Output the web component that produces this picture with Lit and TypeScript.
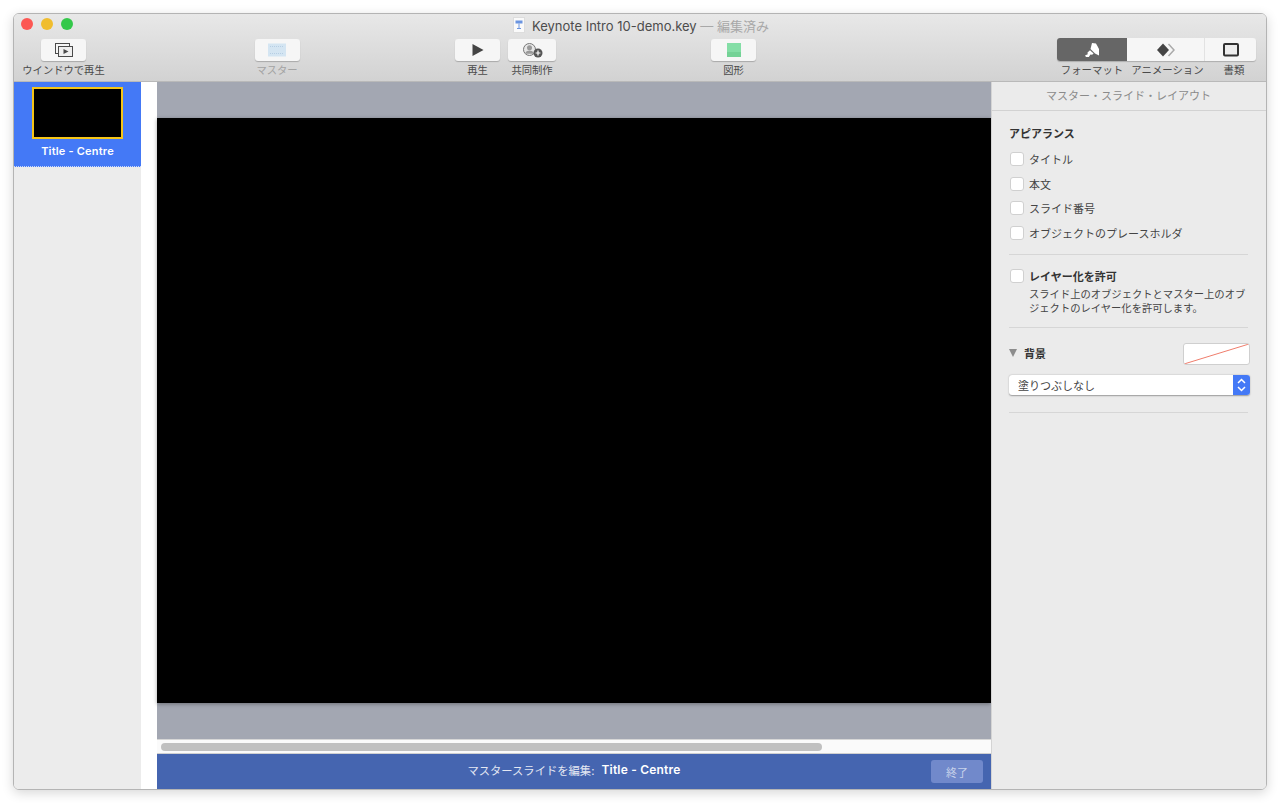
import { LitElement, html, css, svg } from "lit";
import { customElement } from "lit/decorators.js";

const FONT = css`Inter, "Noto Sans CJK JP", sans-serif`;

const icons = {
  window: svg`<rect x="1.5" y="1.5" width="14" height="10" fill="none" stroke="#4a4a4a" stroke-width="1"/>
    <rect x="4.5" y="4.5" width="14" height="10" fill="#efefef" stroke="#4a4a4a" stroke-width="1"/>
    <path d="M9.5 7l5 2.5-5 2.5z" fill="#4a4a4a"/>`,
  master: svg`<rect x="1" y="1.500" width="18" height="13" fill="#d4e5f2"/>
    <path d="M3 4.500h14M3 11.500h14" stroke="#a9c4dc" stroke-width=".7" stroke-dasharray="1 1"/>`,
  play: svg`<path d="M3.500 2l11 6-11 6z" fill="#444"/>`,
  collab: svg`<circle cx="7.500" cy="7.500" r="6" fill="#e6e6e6" stroke="#777"/>
    <circle cx="7.500" cy="5.800" r="2.500" fill="#999"/>
    <path d="M3.200 11.800c.6-2.600 2.300-3.200 4.300-3.200s3.700.6 4.300 3.200" fill="#999"/>
    <circle cx="16" cy="11" r="4.500" fill="#555"/>
    <path d="M13.600 11h4.800M16 8.600v4.800" stroke="#fff" stroke-width="1.200"/>`,
  shape: svg`<rect x="2" y="1" width="14" height="14" fill="#84dea6"/>
    <rect x="2" y="10" width="14" height="5" fill="#74d296"/>`,
  format: svg`<path d="M7 0l4 .5 3 5.500v6.500L10 10.500 5.500 6z" fill="#fff"/>
    <path d="M5 7.200l3.600 3.300-1.500 1.300-1.600-.4L3.800 14 1 14l-1-1.500 2.700-1.300-.2-1.600z" fill="#fff"/>`,
  anim: svg`<path d="M0 7l6-6.500 6 6.500-6 6.500z" fill="#444"/>
    <path d="M11.500 1l5.500 6-5.500 6" fill="none" stroke="#aaa" stroke-width="1.500"/>`,
  doc: svg`<rect x="1" y="1" width="14" height="11.500" rx="1" fill="#eee" stroke="#333" stroke-width="2"/>`,
  file: svg`<rect x=".5" y=".5" width="11" height="15" fill="#fafafa" stroke="#ddd"/>
    <rect x="2.500" y="3.500" width="7" height="3" fill="#6a94e0"/>
    <path d="M6 6.500v5M4 11.500h4" stroke="#6a94e0"/>`,
};

@customElement("tool-button")
export class ToolButton extends LitElement {
  static properties = {
    label: { type: String },
    icon: { attribute: false },
    iconWidth: { type: Number },
  };

  declare label: string;
  declare icon: unknown;
  declare iconWidth: number;

  static styles = css`
    :host {
      display: flex;
      flex-direction: column;
      align-items: center;
      gap: 2px;
      font-family: ${FONT};
    }
    .btn {
      height: 22px;
      width: var(--btn-w, 45px);
      box-sizing: border-box;
      border-radius: 3px;
      background: #f6f6f6;
      box-shadow: 0 1px 1px rgba(0, 0, 0, 0.22);
      display: flex;
      align-items: center;
      justify-content: center;
    }
    .label {
      font-size: 10.300px;
      line-height: 15px;
      color: #4a4a4a;
      white-space: nowrap;
    }
    :host([dim]) .label {
      color: #a3a3a3;
    }
  `;

  render() {
    const w = this.iconWidth || 20;
    return html`
      <div class="btn">
        <svg width=${w} height="16" viewBox="0 0 ${w} 16">${this.icon}</svg>
      </div>
      <div class="label">${this.label}</div>
    `;
  }
}

@customElement("app-root")
export class AppRoot extends LitElement {
  static styles = css`
    :host {
      display: block;
      height: 803px;
      padding: 13px 13px 0;
      box-sizing: border-box;
      background: #fff;
      font-family: ${FONT};
      overflow: hidden;
    }
    .window {
      width: 1254px;
      height: 777px;
      box-sizing: border-box;
      border: 1px solid #b4b4b4;
      border-radius: 6px;
      overflow: hidden;
      display: flex;
      flex-direction: column;
      box-shadow: 0 3px 12px rgba(0, 0, 0, 0.16);
    }
    .toolbar {
      height: 68px;
      flex: none;
      box-sizing: border-box;
      border-bottom: 1px solid #b9b9b9;
      background: linear-gradient(#e8e8e8, #d2d2d2);
      display: flex;
      flex-direction: column;
    }
    .titlebar {
      height: 25px;
      flex: none;
      box-sizing: border-box;
      display: flex;
      align-items: center;
      position: relative;
      justify-content: center;
      font-size: 13px;
      color: #4c4c4c;
      padding-left: 2px;
      padding-bottom: 3px;
      gap: 7px;
    }
    .lights {
      position: absolute;
      left: 7px;
      top: 4px;
      display: flex;
      gap: 8px;
    }
    .light {
      width: 12px;
      height: 12px;
      border-radius: 50%;
    }
    .red { background: #fc5753; }
    .yellow { background: #f0bd2e; }
    .green { background: #34c84a; }
    .edited { color: #a8a8a8; }
    .tools {
      display: flex;
      align-items: flex-start;
    }
    .slot {
      display: flex;
      justify-content: center;
    }
    .slot-window { width: 99px; }
    .slot-master { width: 90px; margin-left: 119px; }
    .slot-play { width: 45px; margin-left: 133px; }
    .slot-collab { width: 48px; margin-left: 8px; --btn-w: 48px; }
    .slot-shape { width: 45px; margin-left: 155px; }
    .segwrap {
      display: flex;
      flex-direction: column;
      margin-left: 301px;
      margin-top: -1px;
    }
    .seg {
      display: flex;
      height: 23px;
      width: 199px;
      background: #f6f6f6;
      border-radius: 3px;
      overflow: hidden;
      box-shadow: 0 1px 1px rgba(0, 0, 0, 0.2);
    }
    .seg > div {
      display: flex;
      align-items: center;
      justify-content: center;
      box-sizing: border-box;
    }
    .seg .s2 {
      border-right: 1px solid #e2e2e2;
    }
    .seg .on {
      background: #666;
    }
    .seglabels {
      display: flex;
      font-size: 10.400px;
      line-height: 15px;
      color: #4a4a4a;
      margin-top: 2px;
      text-align: center;
      white-space: nowrap;
    }
    .seglabels > div {
      box-sizing: border-box;
    }
    .seglabels .s2 { padding-left: 3px; }
    .seglabels .s3 { padding-left: 7px; }
    .s1 { width: 70px; }
    .s2 { width: 78px; }
    .s3 { width: 51px; }
    .body {
      flex: 1;
      display: flex;
      min-height: 0;
    }
    .sidebar {
      width: 127px;
      flex: none;
      background: #ececec;
    }
    .selected {
      height: 85px;
      box-sizing: border-box;
      background: #4479f6;
      border-bottom: 1px dotted #c9d8fb;
      padding-top: 5px;
      display: flex;
      flex-direction: column;
      align-items: center;
    }
    .thumb {
      width: 91px;
      height: 52px;
      box-sizing: border-box;
      background: #000;
      border: 2px solid #f5c518;
      flex: none;
    }
    .thumb-label {
      margin-top: 5px;
      font-size: 11px;
      line-height: 14px;
      font-weight: 600;
      color: #fff;
      letter-spacing: 0.2px;
    }
    .gutter {
      width: 16px;
      flex: none;
      background: #fff;
    }
    .main {
      width: 834px;
      flex: none;
      display: flex;
      flex-direction: column;
    }
    .canvas {
      height: 657px;
      flex: none;
      background: #a3a7b2;
      padding-top: 36px;
      box-sizing: border-box;
    }
    .slide {
      height: 585px;
      background: #000;
      box-shadow: 0 1px 4px rgba(0, 0, 0, 0.35);
    }
    .scroll {
      height: 15px;
      flex: none;
      box-sizing: border-box;
      background: #fafafa;
      border-top: 1px solid #d6d6d6;
      border-bottom: 1px solid #d0d0d0;
      padding: 3px 169px 3px 4px;
    }
    .thumbbar {
      height: 8px;
      border-radius: 4px;
      background: #c0c0c0;
    }
    .editbar {
      flex: 1;
      background: #4565b0;
      display: flex;
      align-items: center;
      position: relative;
      justify-content: center;
      font-size: 11.300px;
      color: #e4e8f3;
      padding-bottom: 4px;
      box-sizing: border-box;
      gap: 7px;
    }
    .editbar b {
      font-weight: 600;
      font-size: 12px;
      color: #fff;
      letter-spacing: 0.2px;
    }
    .done {
      position: absolute;
      right: 8px;
      top: 6px;
      width: 52px;
      height: 23px;
      border-radius: 3px;
      background: #7189cb;
      color: #c7d2ea;
      font-size: 11px;
      display: flex;
      align-items: center;
      justify-content: center;
    }
    .inspector {
      flex: 1;
      background: #ebebeb;
      border-left: 1px solid #d4d4d4;
      display: flex;
      flex-direction: column;
      font-size: 11px;
      color: #444;
    }
    .insp-head {
      height: 29px;
      flex: none;
      box-sizing: border-box;
      border-bottom: 1px solid #d2d2d2;
      display: flex;
      align-items: center;
      justify-content: center;
      color: #8a8a8a;
      padding-bottom: 2px;
      padding-right: 1px;
    }
    .content {
      padding: 15px 17px 0 17px;
    }
    .heading {
      font-weight: 600;
      color: #333;
      line-height: 16px;
      margin-bottom: 9.500px;
    }
    .check-row {
      display: flex;
      align-items: center;
      gap: 5px;
      height: 15px;
      margin-bottom: 9.670px;
      margin-left: 1px;
    }
    .box {
      width: 14px;
      height: 14px;
      flex: none;
      box-sizing: border-box;
      background: #fff;
      border: 1px solid #d0d0d0;
      border-radius: 3px;
    }
    .divider {
      height: 1px;
      background: #d6d6d6;
      margin-right: 1px;
    }
    .d1 { margin-top: 14px; margin-bottom: 13px; }
    .strong {
      font-weight: 600;
      color: #333;
    }
    .check-row.layer { margin-bottom: 4px; }
    .desc {
      padding-left: 20px;
      font-size: 10.300px;
      line-height: 14px;
      color: #444;
      white-space: nowrap;
    }
    .d2 { margin-top: 12px; margin-bottom: 15px; }
    .bg-row {
      display: flex;
      align-items: center;
      height: 22px;
    }
    .bg-label {
      display: flex;
      align-items: center;
      margin-top: -2px;
    }
    .tri {
      width: 0;
      height: 0;
      border-left: 4.500px solid transparent;
      border-right: 4.500px solid transparent;
      border-top: 8px solid #8c8c8c;
      margin-right: 7px;
    }
    .well {
      margin-left: auto;
      margin-right: -1px;
      width: 67px;
      height: 22px;
      box-sizing: border-box;
      background: #fff;
      border: 1px solid #cfcfcf;
      border-radius: 3px;
      overflow: hidden;
    }
    .well svg { display: block; }
    .select {
      margin-top: 10px;
      margin-right: -1px;
      height: 20px;
      background: #fff;
      border-radius: 3px;
      box-shadow: 0 0.500px 1.500px rgba(0, 0, 0, 0.35);
      display: flex;
      align-items: center;
      justify-content: space-between;
      padding-left: 9px;
      overflow: hidden;
    }
    .select span {
      margin-top: -1px;
    }
    .stepper {
      width: 17px;
      height: 20px;
      background: #4479f6;
      display: flex;
      align-items: center;
      justify-content: center;
    }
    .d3 { margin-top: 17px; }
  `;

  render() {
    const rows = ["タイトル", "本文", "スライド番号", "オブジェクトのプレースホルダ"];
    return html`
      <div class="window">
        <header class="toolbar">
          <div class="titlebar">
            <div class="lights">
              <div class="light red"></div>
              <div class="light yellow"></div>
              <div class="light green"></div>
            </div>
            <svg width="12" height="16" viewBox="0 0 12 16">${icons.file}</svg>
            <span>Keynote Intro 10-demo.key <span class="edited">— 編集済み</span></span>
          </div>
          <div class="tools">
            <div class="slot slot-window">
              <tool-button label="ウインドウで再生" .icon=${icons.window}></tool-button>
            </div>
            <div class="slot slot-master">
              <tool-button dim label="マスター" .icon=${icons.master}></tool-button>
            </div>
            <div class="slot slot-play">
              <tool-button label="再生" .iconWidth=${18} .icon=${icons.play}></tool-button>
            </div>
            <div class="slot slot-collab">
              <tool-button label="共同制作" .iconWidth=${21} .icon=${icons.collab}></tool-button>
            </div>
            <div class="slot slot-shape">
              <tool-button label="図形" .iconWidth=${18} .icon=${icons.shape}></tool-button>
            </div>
            <div class="segwrap">
              <div class="seg">
                <div class="s1 on"><svg width="14" height="14" viewBox="0 0 14 14">${icons.format}</svg></div>
                <div class="s2"><svg width="18" height="14" viewBox="0 0 18 14">${icons.anim}</svg></div>
                <div class="s3"><svg width="16" height="14" viewBox="0 0 16 14">${icons.doc}</svg></div>
              </div>
              <div class="seglabels">
                <div class="s1">フォーマット</div>
                <div class="s2">アニメーション</div>
                <div class="s3">書類</div>
              </div>
            </div>
          </div>
        </header>
        <div class="body">
          <aside class="sidebar">
            <div class="selected">
              <div class="thumb"></div>
              <div class="thumb-label">Title - Centre</div>
            </div>
          </aside>
          <div class="gutter"></div>
          <main class="main">
            <div class="canvas"><div class="slide"></div></div>
            <div class="scroll"><div class="thumbbar"></div></div>
            <div class="editbar">
              <span>マスタースライドを編集:</span>
              <b>Title - Centre</b>
              <div class="done">終了</div>
            </div>
          </main>
          <aside class="inspector">
            <div class="insp-head">マスター・スライド・レイアウト</div>
            <div class="content">
              <div class="heading">アピアランス</div>
              ${rows.map(
                (r) => html`<div class="check-row"><div class="box"></div><span>${r}</span></div>`
              )}
              <div class="divider d1"></div>
              <div class="check-row layer"><div class="box"></div><span class="strong">レイヤー化を許可</span></div>
              <div class="desc">スライド上のオブジェクトとマスター上のオブ<br />ジェクトのレイヤー化を許可します。</div>
              <div class="divider d2"></div>
              <div class="bg-row">
                <div class="bg-label">
                  <div class="tri"></div>
                  <span class="strong">背景</span>
                </div>
                <div class="well">
                  <svg width="65" height="20" viewBox="0 0 65 20"><path d="M0 20L65 0" stroke="#ef7d6c" stroke-width="1"/></svg>
                </div>
              </div>
              <div class="select">
                <span>塗りつぶしなし</span>
                <div class="stepper">
                  <svg width="9" height="14" viewBox="0 0 9 14"><path d="M1 5l3.500-3.500L8 5M1 9l3.500 3.500L8 9" fill="none" stroke="#fff" stroke-width="1.500"/></svg>
                </div>
              </div>
              <div class="divider d3"></div>
            </div>
          </aside>
        </div>
      </div>
    `;
  }
}
